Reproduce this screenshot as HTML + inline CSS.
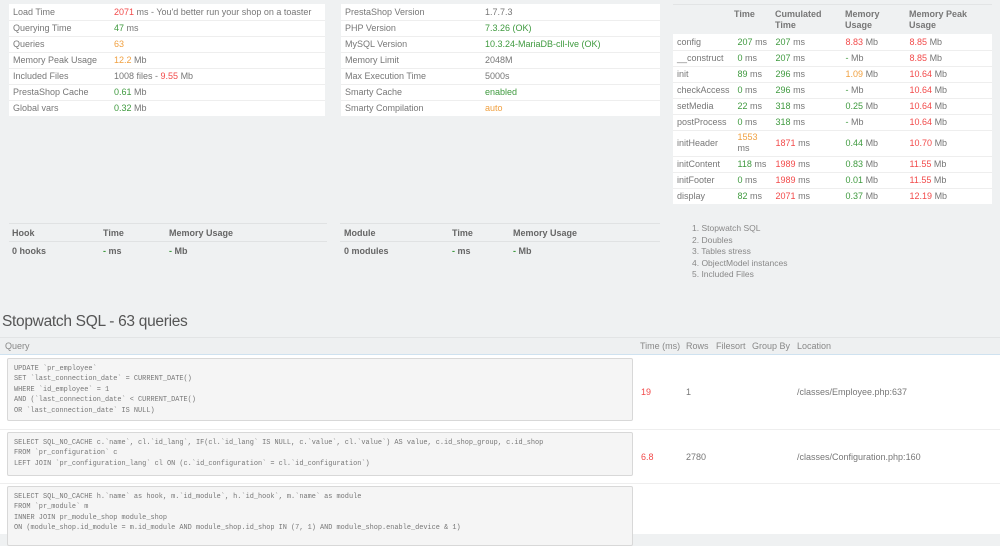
<!DOCTYPE html>
<html><head><meta charset="utf-8"><style>
*{margin:0;padding:0;box-sizing:border-box}
body{width:1000px;height:534px;background:#eff1f2;font-family:"Liberation Sans",sans-serif;font-size:9px;color:#777;position:relative;overflow:hidden}
.a{position:absolute;white-space:nowrap}
.r{color:#f24a4a}.g{color:#3f9a3f}.o{color:#f0a040}
table{border-collapse:collapse;position:absolute}
.t1{background:#fff}
.t1 td{height:16px;border-bottom:1px solid #eee;padding:0 4px;vertical-align:middle}
.pre{position:absolute;background:#f5f5f5;border:1px solid #d8d8d8;border-radius:2px;font-family:"Liberation Mono",monospace;font-size:6.9px;line-height:10.4px;color:#777;padding:5px 6px;white-space:pre}
</style></head><body>

<table class="t1" style="left:9px;top:4px;width:316px">
<tr><td style="width:101px">Load Time</td><td><span class="r">2071</span> ms - You'd better run your shop on a toaster</td></tr>
<tr><td>Querying Time</td><td><span class="g">47</span> ms</td></tr>
<tr><td>Queries</td><td><span class="o">63</span></td></tr>
<tr><td>Memory Peak Usage</td><td><span class="o">12.2</span> Mb</td></tr>
<tr><td>Included Files</td><td>1008 files - <span class="r">9.55</span> Mb</td></tr>
<tr><td>PrestaShop Cache</td><td><span class="g">0.61</span> Mb</td></tr>
<tr><td style="border:0">Global vars</td><td style="border:0"><span class="g">0.32</span> Mb</td></tr>
</table>

<table class="t1" style="left:341px;top:4px;width:319px">
<tr><td style="width:140px">PrestaShop Version</td><td>1.7.7.3</td></tr>
<tr><td>PHP Version</td><td class="g">7.3.26 (OK)</td></tr>
<tr><td>MySQL Version</td><td class="g">10.3.24-MariaDB-cll-lve (OK)</td></tr>
<tr><td>Memory Limit</td><td>2048M</td></tr>
<tr><td>Max Execution Time</td><td>5000s</td></tr>
<tr><td>Smarty Cache</td><td class="g">enabled</td></tr>
<tr><td style="border:0">Smarty Compilation</td><td style="border:0" class="o">auto</td></tr>
</table>

<div class="a" style="left:673px;top:4px;width:319px;height:1px;background:#e2e4e5"></div>
<div class="a" style="left:734px;top:9px;font-weight:bold;line-height:11px">Time</div>
<div class="a" style="left:775px;top:9px;font-weight:bold;line-height:11px">Cumulated<br>Time</div>
<div class="a" style="left:845px;top:9px;font-weight:bold;line-height:11px">Memory<br>Usage</div>
<div class="a" style="left:909px;top:9px;font-weight:bold;line-height:11px">Memory Peak<br>Usage</div>
<table class="t1" style="left:673px;top:34px;width:319px">
<tr><td style="width:58px">config</td><td style="width:40px;padding:0 2px 0 4px"><span class="g">207</span> ms</td><td style="width:70px;padding-left:2px"><span class="g">207</span> ms</td><td style="width:64px;padding-left:2px"><span class="r">8.83</span> Mb</td><td style="padding-left:2px"><span class="r">8.85</span> Mb</td></tr>
<tr><td>__construct</td><td style="padding-left:4px"><span class="g">0</span> ms</td><td style="padding-left:2px"><span class="g">207</span> ms</td><td style="padding-left:2px"><span class="g">-</span> Mb</td><td style="padding-left:2px"><span class="r">8.85</span> Mb</td></tr>
<tr><td>init</td><td><span class="g">89</span> ms</td><td style="padding-left:2px"><span class="g">296</span> ms</td><td style="padding-left:2px"><span class="o">1.09</span> Mb</td><td style="padding-left:2px"><span class="r">10.64</span> Mb</td></tr>
<tr><td>checkAccess</td><td><span class="g">0</span> ms</td><td style="padding-left:2px"><span class="g">296</span> ms</td><td style="padding-left:2px"><span class="g">-</span> Mb</td><td style="padding-left:2px"><span class="r">10.64</span> Mb</td></tr>
<tr><td>setMedia</td><td><span class="g">22</span> ms</td><td style="padding-left:2px"><span class="g">318</span> ms</td><td style="padding-left:2px"><span class="g">0.25</span> Mb</td><td style="padding-left:2px"><span class="r">10.64</span> Mb</td></tr>
<tr><td>postProcess</td><td><span class="g">0</span> ms</td><td style="padding-left:2px"><span class="g">318</span> ms</td><td style="padding-left:2px"><span class="g">-</span> Mb</td><td style="padding-left:2px"><span class="r">10.64</span> Mb</td></tr>
<tr><td style="height:26px">initHeader</td><td style="line-height:11px"><span class="o">1553</span><br>ms</td><td style="padding-left:2px"><span class="r">1871</span> ms</td><td style="padding-left:2px"><span class="g">0.44</span> Mb</td><td style="padding-left:2px"><span class="r">10.70</span> Mb</td></tr>
<tr><td>initContent</td><td><span class="g">118</span> ms</td><td style="padding-left:2px"><span class="r">1989</span> ms</td><td style="padding-left:2px"><span class="g">0.83</span> Mb</td><td style="padding-left:2px"><span class="r">11.55</span> Mb</td></tr>
<tr><td>initFooter</td><td><span class="g">0</span> ms</td><td style="padding-left:2px"><span class="r">1989</span> ms</td><td style="padding-left:2px"><span class="g">0.01</span> Mb</td><td style="padding-left:2px"><span class="r">11.55</span> Mb</td></tr>
<tr><td style="border:0">display</td><td style="border:0"><span class="g">82</span> ms</td><td style="border:0;padding-left:2px"><span class="r">2071</span> ms</td><td style="border:0;padding-left:2px"><span class="g">0.37</span> Mb</td><td style="border:0;padding-left:2px"><span class="r">12.19</span> Mb</td></tr>
</table>

<div class="a" style="left:9px;top:223px;width:318px;height:1px;background:#e0e2e3"></div>
<div class="a" style="left:9px;top:241px;width:318px;height:1px;background:#e0e2e3"></div>
<div class="a" style="left:12px;top:228px;font-weight:bold;color:#666">Hook</div>
<div class="a" style="left:103px;top:228px;font-weight:bold;color:#666">Time</div>
<div class="a" style="left:169px;top:228px;font-weight:bold;color:#666">Memory Usage</div>
<div class="a" style="left:12px;top:246px;font-weight:bold;color:#666">0 hooks</div>
<div class="a" style="left:103px;top:246px;font-weight:bold;color:#666"><span class="g">-</span> ms</div>
<div class="a" style="left:169px;top:246px;font-weight:bold;color:#666"><span class="g">-</span> Mb</div>

<div class="a" style="left:340px;top:223px;width:320px;height:1px;background:#e0e2e3"></div>
<div class="a" style="left:340px;top:241px;width:320px;height:1px;background:#e0e2e3"></div>
<div class="a" style="left:344px;top:228px;font-weight:bold;color:#666">Module</div>
<div class="a" style="left:452px;top:228px;font-weight:bold;color:#666">Time</div>
<div class="a" style="left:513px;top:228px;font-weight:bold;color:#666">Memory Usage</div>
<div class="a" style="left:344px;top:246px;font-weight:bold;color:#666">0 modules</div>
<div class="a" style="left:452px;top:246px;font-weight:bold;color:#666"><span class="g">-</span> ms</div>
<div class="a" style="left:513px;top:246px;font-weight:bold;color:#666"><span class="g">-</span> Mb</div>

<div class="a" style="left:692px;top:223px;line-height:11.6px;color:#888;font-size:8.5px">1. Stopwatch SQL<br>2. Doubles<br>3. Tables stress<br>4. ObjectModel instances<br>5. Included Files</div>

<div class="a" style="left:2px;top:313px;font-size:15.5px;color:#555;letter-spacing:-0.3px">Stopwatch SQL - 63 queries</div>

<div class="a" style="left:0;top:337px;width:1000px;height:18px;background:#eef0f1;border-top:1px solid #e2e4e5;border-bottom:1px solid #cfe2f0"></div>
<div class="a" style="left:5px;top:341px;color:#888">Query</div>
<div class="a" style="left:640px;top:341px;color:#888">Time (ms)</div>
<div class="a" style="left:686px;top:341px;color:#888">Rows</div>
<div class="a" style="left:716px;top:341px;color:#888">Filesort</div>
<div class="a" style="left:752px;top:341px;color:#888">Group By</div>
<div class="a" style="left:797px;top:341px;color:#888">Location</div>

<div class="a" style="left:0;top:355px;width:1000px;height:75px;background:#fff;border-bottom:1px solid #eee"></div>
<div class="a" style="left:0;top:430px;width:1000px;height:54px;background:#fff;border-bottom:1px solid #eee"></div>
<div class="a" style="left:0;top:484px;width:1000px;height:50px;background:#fff"></div>

<div class="pre" style="left:7px;top:358px;width:626px;height:63px">UPDATE `pr_employee`
SET `last_connection_date` = CURRENT_DATE()
WHERE `id_employee` = 1
AND (`last_connection_date` &lt; CURRENT_DATE()
OR `last_connection_date` IS NULL)</div>
<div class="pre" style="left:7px;top:432px;width:626px;height:44px">SELECT SQL_NO_CACHE c.`name`, cl.`id_lang`, IF(cl.`id_lang` IS NULL, c.`value`, cl.`value`) AS value, c.id_shop_group, c.id_shop
FROM `pr_configuration` c
LEFT JOIN `pr_configuration_lang` cl ON (c.`id_configuration` = cl.`id_configuration`)</div>
<div class="pre" style="left:7px;top:486px;width:626px;height:60px">SELECT SQL_NO_CACHE h.`name` as hook, m.`id_module`, h.`id_hook`, m.`name` as module
FROM `pr_module` m
INNER JOIN pr_module_shop module_shop
ON (module_shop.id_module = m.id_module AND module_shop.id_shop IN (7, 1) AND module_shop.enable_device &amp; 1)</div>

<div class="a r" style="left:641px;top:387px">19</div>
<div class="a" style="left:686px;top:387px">1</div>
<div class="a" style="left:797px;top:387px">/classes/Employee.php:637</div>
<div class="a r" style="left:641px;top:452px">6.8</div>
<div class="a" style="left:686px;top:452px">2780</div>
<div class="a" style="left:797px;top:452px">/classes/Configuration.php:160</div>
</body></html>
